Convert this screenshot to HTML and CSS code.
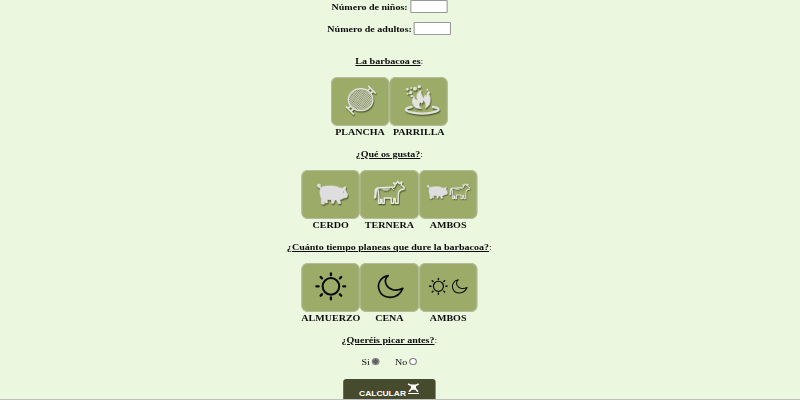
FILE: index.html
```html
<!DOCTYPE html>
<html lang="es">
<head>
<meta charset="utf-8">
<title>Calculadora de barbacoa</title>
<link rel="stylesheet" href="styles.css">
</head>
<body>
<svg width="0" height="0" class="defs">
  <defs>
    <pattern id="grill" width="5" height="5" patternUnits="userSpaceOnUse" patternTransform="rotate(40)">
      <path d="M0 1H5M1 0V5" stroke="#e2e2df" stroke-width="1.7"/>
    </pattern>
    <g id="pig">
      <path fill="#dedede" stroke="#dedede" stroke-width="2" d="M47 48C38 49 33 36 42 36C49 36 49 43 47 47C54 43 63 42 72 42C84 41 96 42 104 47L113 49L124 43L122 53L126 62L129 66L127 76L116 79L110 82L105 83L108 94L101 96L95 84L90 84L87 94L81 94L80 83L67 83L68 93L62 93L60 86L58 97L50 96L49 79C45 70 44 58 47 48Z"/>
    </g>
    <g id="cow" fill="none" stroke="#e6e6e3" stroke-width="4.5" stroke-linejoin="round" stroke-linecap="round">
      <path d="M42 48L92 45L95 39L90 33L98 35L103 28L107 35L115 30L113 39L122 46L122 51L113 53L106 59L104 72L104 94L96 94L95 80L91 79L90 94L83 94L83 78L62 78L62 94L56 94L55 83L51 82V94L45 94L46 77L44 60L42 48Q33 51 35 66L33 77L36 77L38 55"/>
      <path stroke-width="3" d="M55 51H78M60 54H73M85 48L90 53"/>
    </g>
    <g id="sun" fill="none" stroke="#080a03" stroke-linecap="round">
      <circle cx="152" cy="154" r="25" stroke-width="6"/>
      <path stroke-width="7" d="M152 115V121M152 187V193M108 154H115M189 154H195M121 126L125 130M179 130L183 126M121 182L125 178M179 178L183 182"/>
    </g>
    <path id="moon" fill="none" stroke="#080a03" stroke-width="5" stroke-linejoin="round" d="M326 122C302 126 292 147 299 166C309 193 354 197 370 160C348 171 328 164 320 149C315 139 317 130 326 122Z"/>
  </defs>
</svg>
<main class="page">
  <form class="form">
    <label class="field"><span>Número de niños:</span> <input type="text"></label>
    <label class="field adults"><span>Número de adultos:</span> <input type="text"></label>

    <section class="group">
      <h2><u>La barbacoa es</u>:</h2>
      <div class="options">
        <div class="option">
          <svg class="tile" viewBox="0 0 59 49" preserveAspectRatio="none"><g class="shade" transform="translate(4 3) scale(.3333)">
            <ellipse cx="77" cy="59" rx="37" ry="33" fill="url(#grill)" stroke="#e2e2df" stroke-width="4"/>
            <path stroke="#e2e2df" stroke-width="5" stroke-linecap="round" fill="none" d="M101 19L121 39M34 81L55 102M99 31L106 24M107 40L115 33M39 86L47 78M48 95L55 87"/>
          </g></svg>
          <span>PLANCHA</span>
        </div>
        <div class="option">
          <svg class="tile" viewBox="0 0 59 49" preserveAspectRatio="none"><g class="shade" transform="translate(5 3) scale(.3333)">
            <path fill="none" stroke="#dedede" stroke-width="7" stroke-linecap="round" d="M52 81C27 85 30 94 55 98C77 102 105 101 124 95C139 90 136 84 116 81"/>
            <path fill="#e2e2df" stroke="#e2e2df" stroke-width="2" d="M66 84C51 75 52 60 59 49C61 57 65 61 70 61C65 47 68 38 81 31C77 42 87 47 87 57L93 45C95 50 98 52 98 43L103 32C101 44 110 48 108 61C107 75 103 80 93 84C98 74 93 65 86 59C88 69 83 73 78 66C72 73 75 80 82 86Z"/>
            <g fill="#dedede"><circle cx="39" cy="28" r="4"/><circle cx="51" cy="24" r="3"/><circle cx="62" cy="26" r="6"/><circle cx="75" cy="20" r="5"/><circle cx="49" cy="38" r="5"/><circle cx="40" cy="41" r="3"/><circle cx="53" cy="48" r="4"/><circle cx="99" cy="29" r="3"/><circle cx="105" cy="38" r="3"/></g>
          </g></svg>
          <span>PARRILLA</span>
        </div>
      </div>
    </section>

    <section class="group">
      <h2><u>¿Qué os gusta?</u>:</h2>
      <div class="options">
        <div class="option">
          <svg class="tile" viewBox="0 0 59 49" preserveAspectRatio="none"><g class="shade" transform="translate(3.5 2) scale(.3333)"><use href="#pig"/><circle cx="116" cy="60" r="1.5" fill="#777f5e"/></g></svg>
          <span>CERDO</span>
        </div>
        <div class="option">
          <svg class="tile" viewBox="0 0 59 49" preserveAspectRatio="none"><g class="shade" transform="translate(4 2) scale(.3333)"><use href="#cow"/></g></svg>
          <span>TERNERA</span>
        </div>
        <div class="option">
          <svg class="tile" viewBox="0 0 59 49" preserveAspectRatio="none">
            <g class="shade" transform="translate(-.4 7.2) scale(.225)"><use href="#pig"/></g>
            <g class="shade" transform="translate(23.5 7.5) scale(.225)"><use href="#cow"/></g>
          </svg>
          <span>AMBOS</span>
        </div>
      </div>
    </section>

    <section class="group">
      <h2><u>¿Cuánto tiempo planeas que dure la barbacoa?</u>:</h2>
      <div class="options">
        <div class="option">
          <svg class="tile" viewBox="0 0 59 49" preserveAspectRatio="none"><use href="#sun" transform="translate(-21 -28) scale(.3333)"/></svg>
          <span>ALMUERZO</span>
        </div>
        <div class="option">
          <svg class="tile" viewBox="0 0 59 49" preserveAspectRatio="none"><use href="#moon" transform="translate(-80 -28) scale(.3333)"/></svg>
          <span>CENA</span>
        </div>
        <div class="option">
          <svg class="tile" viewBox="0 0 59 49" preserveAspectRatio="none">
            <use href="#sun" transform="translate(-11.3 -7.8) scale(.202)"/>
            <use href="#moon" transform="translate(-26.5 -7.8) scale(.202)"/>
          </svg>
          <span>AMBOS</span>
        </div>
      </div>
    </section>

    <section class="group snack">
      <h2><u>¿Queréis picar antes?</u>:</h2>
      <div class="choices">
        <label><span>Si</span><input type="radio" name="picar" checked></label>
        <label><span>No</span><input type="radio" name="picar"></label>
      </div>
    </section>

    <button class="submit" type="button"><span>CALCULAR</span>
      <svg viewBox="0 0 36 36" preserveAspectRatio="none"><path fill="none" stroke="#fff" stroke-width="4.5" d="M3 3L12 7H25L33 3M13 8L14 16L6 26M24 8L23 16L31 26M13 18H24"/><path fill="#fff" d="M12 7H25L23 17H14ZM3 30H34V33H3Z"/></svg>
    </button>
  </form>
</main>
</body>
</html>
```
FILE: styles.css
```css
* { box-sizing: border-box; }
html { background: #c0c0c0; }
body { margin: 0; height: 400px; overflow: hidden; background: #c0c0c0; }
.defs { display: block; height: 0; }

.page {
  height: 398.6px;
  overflow: hidden;
  background: #ebf7df;
}

/* The form is drawn 10% wider than its natural proportions. */
.form {
  width: 708px;
  padding-top: 1px;
  display: flex;
  flex-direction: column;
  align-items: center;
  transform: scaleX(1.1);
  transform-origin: 0 0;
  font: bold 9.15px/11px "Liberation Serif", serif;
  color: #0c0c0c;
}

.field { display: flex; align-items: center; height: 11px; gap: 2px; }
.field span, .option span, h2, .choices span { position: relative; top: .6px; }
.adults { margin: 11px 0 21px; }
.field input {
  width: 34px;
  height: 12.5px;
  border: 1px solid #999;
  border-radius: 1px;
  background: #fff;
  padding: 0;
}

.group { display: flex; flex-direction: column; align-items: center; margin-bottom: 11px; }
h2 { margin: 0 0 11px; font-size: inherit; font-weight: normal; line-height: 11px; }
h2 u { font-weight: bold; }
.options { display: flex; }
.option { width: 53.4px; text-align: center; line-height: 11px; white-space: nowrap; }
.tile {
  display: block;
  width: 53.4px;
  height: 49px;
  border-radius: 6px;
  background: #9dab68;
  box-shadow: inset 0 0 0 .9px #b5bb9b;
}
.shade { filter: drop-shadow(2px 4px 2px rgba(55, 65, 20, .75)); }

.choices { display: flex; gap: 13.5px; font-weight: normal; }
.choices label { display: flex; align-items: center; height: 11px; gap: 2px; }
.choices input {
  appearance: none;
  width: 7.3px;
  height: 7.4px;
  margin: 0;
  border: .8px solid #777;
  border-radius: 50%;
  background: #fff;
}
.choices input:checked { background: radial-gradient(circle, #606060 0 2.2px, #fff 2.8px); }

.snack { margin-bottom: 12px; }
.submit {
  display: flex;
  justify-content: center;
  align-items: flex-start;
  gap: 1px;
  width: 84.5px;
  height: 25px;
  padding: 4px 0 0;
  border: 0;
  border-radius: 3px;
  background: #474b2d;
  color: #fff;
  font: bold 7.7px/21px "Liberation Sans", sans-serif;
}
.submit svg { width: 11.5px; height: 12px; }
```
